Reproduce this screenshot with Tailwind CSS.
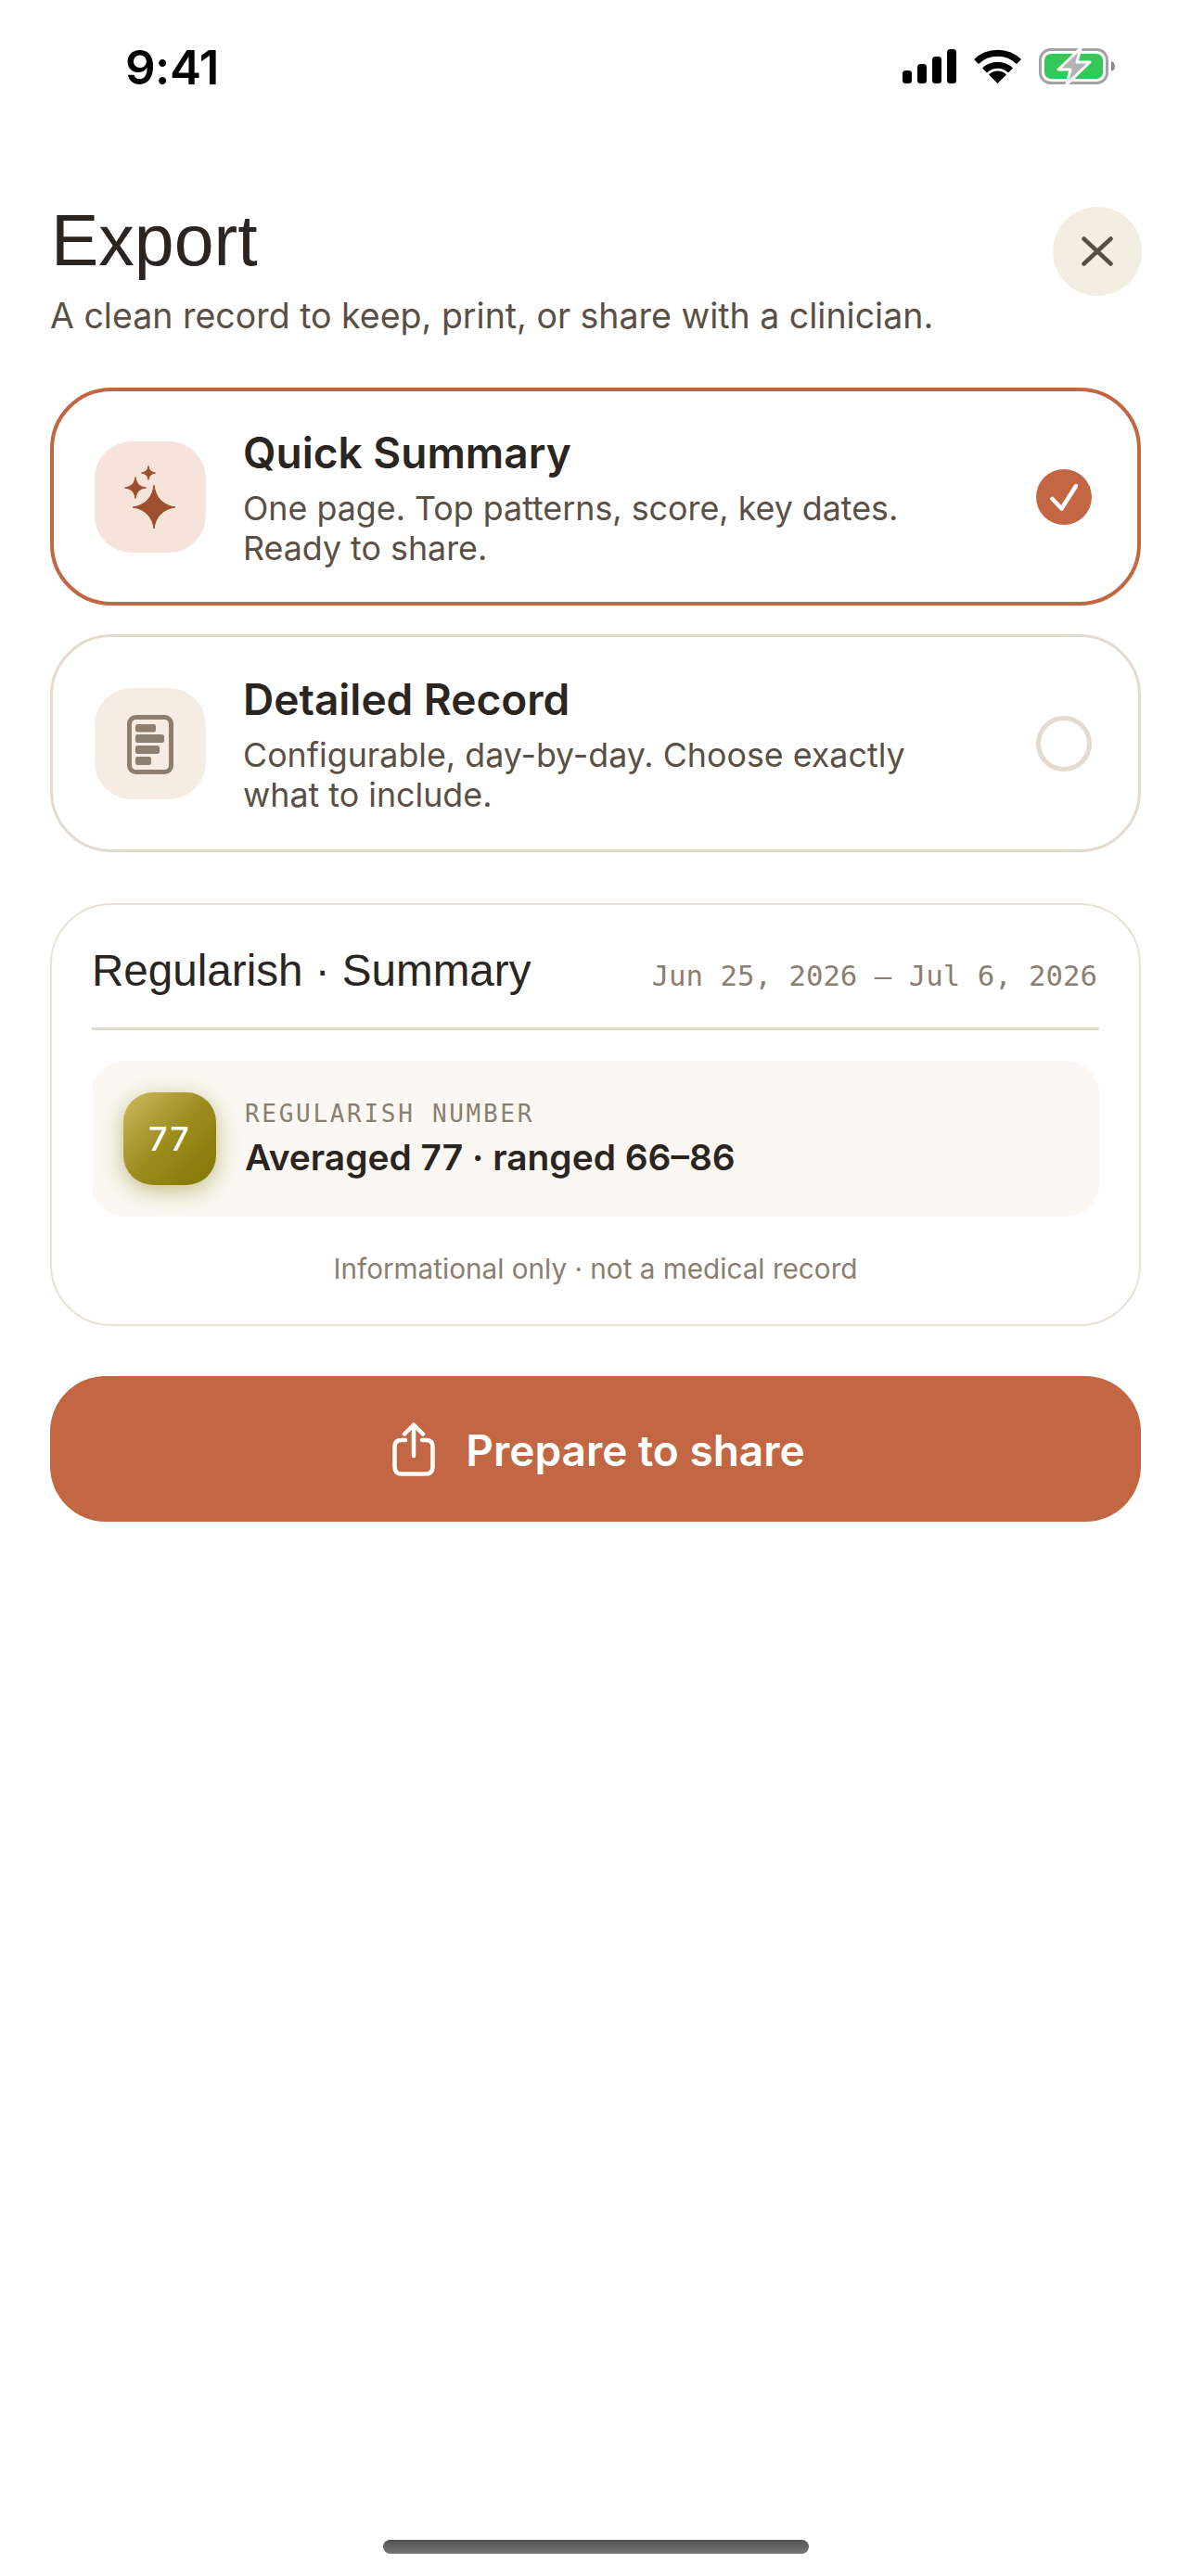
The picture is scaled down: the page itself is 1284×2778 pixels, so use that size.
<!DOCTYPE html>
<html>
<head>
<meta charset="utf-8">
<script src="https://cdn.jsdelivr.net/npm/@tailwindcss/browser@4"></script>
</head>
<body class="bg-white">
<main class="w-[1284px] h-[2778px] flex flex-col bg-white overflow-hidden font-['Inter',sans-serif] text-[#2a2521]">
  <!-- status bar -->
  <div class="h-[130px] shrink-0 flex items-start justify-between pl-[135px] pr-[82px] pt-[42px]">
    <span class="font-semibold text-[51px] leading-[62px] text-black tracking-[-0.5px]">9:41</span>
    <div class="flex items-start pt-[11px]">
      <svg width="58" height="37" viewBox="0 0 58 37" fill="#000"><rect x="0" y="23" width="10" height="14" rx="3.5"/><rect x="16" y="16" width="10" height="21" rx="3.5"/><rect x="32" y="8" width="10" height="29" rx="3.5"/><rect x="48" y="0" width="10" height="37" rx="3.5"/></svg>
      <svg class="ml-[19px]" width="51" height="37" viewBox="0 0 51 37"><path d="M2.5 13.5 A33 33 0 0 1 48.5 13.5" fill="none" stroke="#000" stroke-width="7"/><path d="M11.5 23 A20 20 0 0 1 39.5 23" fill="none" stroke="#000" stroke-width="7"/><path d="M25.5 37 L16 27.5 A13.5 13.5 0 0 1 35 27.5 Z" fill="#000"/></svg>
      <svg class="ml-[19px] -mt-[1px]" width="82" height="39" viewBox="0 0 82 39"><rect x="1.5" y="1.5" width="72" height="36" rx="11" fill="none" stroke="#a3a3a3" stroke-width="3"/><path d="M78 14 C81 15 82 17 82 19.5 C82 22 81 24 78 25 Z" fill="#8a8a8a"/><rect x="6" y="6" width="63" height="27" rx="7" fill="#34c759"/><path d="M45 0 L21 23 H34 L30 39 L55 15 H41 Z" fill="#b2b2b2" stroke="#fff" stroke-width="3" stroke-linejoin="round"/></svg>
    </div>
  </div>

  <div class="flex flex-col px-[54px] pt-[84px]">
    <!-- header -->
    <header class="flex items-start justify-between">
      <div>
        <h1 class="font-['Liberation_Sans',sans-serif] font-normal text-[77px] leading-[90px] pl-[1px]">Export</h1>
        <p class="mt-[13px] text-[37.5px] leading-[48px] text-[#5a4f45]">A clean record to keep, print, or share with a clinician.</p>
      </div>
      <button class="mt-[9px] -mr-[1px] w-[96px] h-[96px] rounded-full bg-[#f3ede2] flex items-center justify-center">
        <svg width="34" height="32" viewBox="0 0 34 32" fill="none" stroke="#5a4f45" stroke-width="4.5" stroke-linecap="round"><path d="M2.5 2.5 L31.5 29.5 M31.5 2.5 L2.5 29.5"/></svg>
      </button>
    </header>

    <!-- options -->
    <section class="mt-[53px] flex flex-col gap-[31px]">
      <div class="h-[235px] rounded-[66px] border-[4px] border-[#c26643] bg-white flex items-center pl-[44px] pr-[49px]">
        <div class="w-[120px] h-[120px] shrink-0 rounded-[40px] bg-[#f6e4da] flex items-center justify-center">
          <svg width="120" height="120" viewBox="0 0 120 120" fill="#9e4f2e" stroke="#9e4f2e" stroke-width="1" stroke-linejoin="round">
            <path d="M64 47 C65.5 60 73 69 87 71 C73 73 65.5 82 64 94 C62.5 82 55 73 41 71 C55 69 62.5 60 64 47 Z"/>
            <path d="M44 38.5 C45 45 48 49 55.5 50 C48 51 45 55 44 61.5 C43 55 40 51 32.5 50 C40 49 43 45 44 38.5 Z"/>
            <path d="M58 26.5 C58.6 30.5 60.5 33 65.5 34 C60.5 35 58.6 37.5 58 41.5 C57.4 37.5 55.5 35 50.5 34 C55.5 33 57.4 30.5 58 26.5 Z"/>
          </svg>
        </div>
        <div class="ml-[40px] w-[780px]">
          <h2 class="text-[46px] leading-[58px] font-semibold">Quick Summary</h2>
          <p class="mt-[10px] text-[35.8px] leading-[43px] text-[#5a4f45]">One page. Top patterns, score, key dates. Ready to share.</p>
        </div>
        <div class="ml-auto w-[60px] h-[60px] shrink-0 rounded-full bg-[#c26643] flex items-center justify-center">
          <svg width="30" height="30" viewBox="0 0 30 30" fill="none" stroke="#fff" stroke-width="4.5" stroke-linecap="round" stroke-linejoin="round"><path d="M2.5 17 L12.5 27.5 L28 3"/></svg>
        </div>
      </div>

      <div class="h-[235px] rounded-[66px] border-[3px] border-[#e3dbcf] bg-white flex items-center pl-[45px] pr-[50px]">
        <div class="w-[120px] h-[120px] shrink-0 rounded-[40px] bg-[#f5ede3] flex items-center justify-center">
          <svg width="120" height="120" viewBox="0 0 120 120" fill="#8c7f70">
            <rect x="37.5" y="31.5" width="45" height="59" rx="7" fill="none" stroke="#8c7f70" stroke-width="5"/>
            <rect x="44" y="39" width="22" height="8.5" rx="2.5"/>
            <rect x="44" y="50" width="31" height="9" rx="2.5"/>
            <rect x="44" y="62" width="26" height="9" rx="2.5"/>
            <rect x="44" y="74" width="17" height="9" rx="2.5"/>
          </svg>
        </div>
        <div class="ml-[40px] w-[780px]">
          <h2 class="text-[46px] leading-[58px] font-semibold">Detailed Record</h2>
          <p class="mt-[10px] text-[35.8px] leading-[43px] text-[#5a4f45]">Configurable, day-by-day. Choose exactly what to include.</p>
        </div>
        <div class="ml-auto w-[60px] h-[60px] shrink-0 rounded-full border-[5px] border-[#e3dbcf]"></div>
      </div>
    </section>

    <!-- preview -->
    <section class="mt-[55px] h-[456px] rounded-[66px] border-[2px] border-[#e8e2d6] bg-white px-[43px] pt-[42px]">
      <div class="flex items-baseline justify-between pb-[32px] border-b-[3px] border-[#e3dbcf]">
        <h3 class="font-['Liberation_Sans',sans-serif] font-normal text-[47.6px] leading-[58px]">Regularish · Summary</h3>
        <span class="font-['DejaVu_Sans_Mono',monospace] text-[30.7px] text-[#8a7e70] pr-[2px]">Jun 25, 2026 — Jul 6, 2026</span>
      </div>
      <div class="mt-[33px] h-[168px] rounded-[36px] bg-[#fbf8f3] flex items-center pl-[34px]">
        <div class="w-[100px] h-[100px] shrink-0 rounded-[32px] bg-gradient-to-br from-[#cdbb5c] via-[#9c8c1c] to-[#827600] shadow-[0_6px_26px_rgba(130,118,0,0.45)] flex items-center justify-center text-white text-[36px] font-medium tracking-[2px]">77</div>
        <div class="ml-[31px]">
          <p class="font-['DejaVu_Sans_Mono',monospace] text-[26px] leading-[34px] tracking-[2.7px] text-[#8a7e70]">REGULARISH NUMBER</p>
          <p class="mt-[6px] text-[38.9px] leading-[48px] font-semibold">Averaged 77 · ranged 66–86</p>
        </div>
      </div>
      <p class="mt-[36px] text-center text-[29.7px] leading-[40px] text-[#8a7e70]">Informational only · not a medical record</p>
    </section>

    <!-- CTA -->
    <button class="mt-[54px] h-[157px] rounded-[60px] bg-[#c26643] flex items-center justify-center gap-[33px] pl-[7px] pt-[2px] text-white">
      <svg class="-mt-[2px]" width="46" height="58" viewBox="0 0 46 58" fill="none" stroke="#fff" stroke-width="4.5" stroke-linecap="round" stroke-linejoin="round"><path d="M23 36 V3 M13 12.5 L23 2.5 L33 12.5"/><path d="M14 19 H10 Q2.5 19 2.5 26 V48 Q2.5 55.5 10 55.5 H36 Q43.5 55.5 43.5 48 V26 Q43.5 19 36 19 H32"/></svg>
      <span class="text-[46px] leading-[58px] font-semibold">Prepare to share</span>
    </button>
  </div>

  <!-- home indicator -->
  <div class="mt-auto mb-[24px] mx-auto w-[459px] h-[15px] shrink-0 rounded-full bg-gradient-to-b from-[#525252] to-[#787878]"></div>
</main>
</body>
</html>
